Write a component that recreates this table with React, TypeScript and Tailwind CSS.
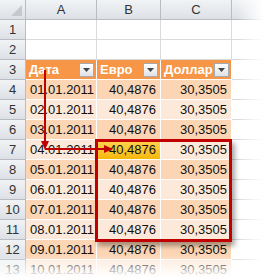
const rows = [
  "01.01.2011",
  "02.01.2011",
  "03.01.2011",
  "04.01.2011",
  "05.01.2011",
  "06.01.2011",
  "07.01.2011",
  "08.01.2011",
  "09.01.2011",
  "10.01.2011",
];

const FilterButton = () => (
  <span className="ml-auto mr-[2px] flex h-[14px] w-[15px] items-center justify-center border border-[#a7abb0] bg-gradient-to-b from-[#ffffff] to-[#dfe2e6]">
    <svg width="7" height="4" viewBox="0 0 7 4">
      <path d="M0 0 L7 0 L3.5 4 Z" fill="#444" />
    </svg>
  </span>
);

const App = () => {
  const cell = "h-[20px] border-r border-b flex items-center";
  const head = "border-[#b9bdc3] bg-gradient-to-b from-[#f1f3f5] to-[#dde1e6] text-[#333] justify-center";
  const plain = "border-[#dadada] bg-white";

  return (
    <div
      className="relative h-[277px] w-[263px] overflow-hidden bg-white text-[13px] text-[#111]"
      style={{ fontFamily: '"Liberation Sans", Arial, sans-serif' }}
    >
      <div className="grid grid-cols-[26px_71px_64px_71px_1fr]">
        {/* column headers */}
        <div className={`${cell} ${head} relative`}>
          <svg className="absolute bottom-[3px] right-[3px]" width="11" height="11" viewBox="0 0 11 11">
            <path d="M11 0 L11 11 L0 11 Z" fill="#c5c9ce" />
          </svg>
        </div>
        <div className={`${cell} ${head}`}>A</div>
        <div className={`${cell} ${head}`}>B</div>
        <div className={`${cell} ${head}`}>C</div>
        <div className={`${cell} ${head}`}></div>

        {/* rows 1-2 */}
        {[1, 2].map((n) => (
          <div key={n} className="contents">
            <div className={`${cell} ${head}`}>{n}</div>
            <div className={`${cell} ${plain}`}></div>
            <div className={`${cell} ${plain}`}></div>
            <div className={`${cell} ${plain}`}></div>
            <div className={`${cell} ${plain}`}></div>
          </div>
        ))}

        {/* row 3 table header */}
        <div className={`${cell} ${head}`}>3</div>
        <div className={`${cell} border-white bg-[#f79646] pl-[3px] font-bold text-white`}>
          Дата
          <FilterButton />
        </div>
        <div className={`${cell} border-white bg-[#f79646] pl-[3px] font-bold text-white`}>
          Евро
          <FilterButton />
        </div>
        <div className={`${cell} border-white bg-[#f79646] pl-[3px] font-bold text-white`}>
          Доллар
          <FilterButton />
        </div>
        <div className={`${cell} ${plain}`}></div>

        {rows.map((d, i) => {
          const n = i + 4;
          const bg = n % 2 === 0 ? "bg-[#fcd5b4]" : "bg-[#fde9d9]";
          const hl = n === 7;
          return (
            <div key={d} className="contents">
              <div className={`${cell} ${head}`}>{n}</div>
              <div className={`${cell} border-white ${bg} pl-[4px]`}>{d}</div>
              <div
                className={`${cell} border-white justify-end pr-[4px] ${
                  hl ? "bg-gradient-to-b from-[#ffd24d] to-[#f5b800]" : bg
                }`}
              >
                40,4876
              </div>
              <div className={`${cell} border-white ${bg} justify-end pr-[4px]`}>30,3505</div>
              <div className={`${cell} ${plain}`}></div>
            </div>
          );
        })}
      </div>

      {/* selection frame */}
      <div className="absolute left-[95px] top-[139px] h-[103px] w-[137px] border-[3px] border-[#c00000] shadow-[3px_4px_5px_rgba(0,0,0,0.35)]"></div>

      {/* arrow */}
      <svg className="absolute left-0 top-0" width="263" height="277" viewBox="0 0 263 277">
        <line x1="45" y1="70" x2="45" y2="143" stroke="#c00000" strokeWidth="2" />
        <path d="M41 141 L49 141 L45 150 Z" fill="#c00000" />
        <line x1="45" y1="149" x2="106" y2="149" stroke="#c00000" strokeWidth="2" />
        <path d="M104 145 L104 153 L113 149 Z" fill="#c00000" />
      </svg>

      {/* fades */}
      <div className="absolute right-0 top-0 h-full w-[26px] bg-gradient-to-r from-transparent to-white"></div>
      <div className="absolute bottom-0 left-0 h-[22px] w-full bg-gradient-to-b from-transparent to-white"></div>
    </div>
  );
};

export default App;
